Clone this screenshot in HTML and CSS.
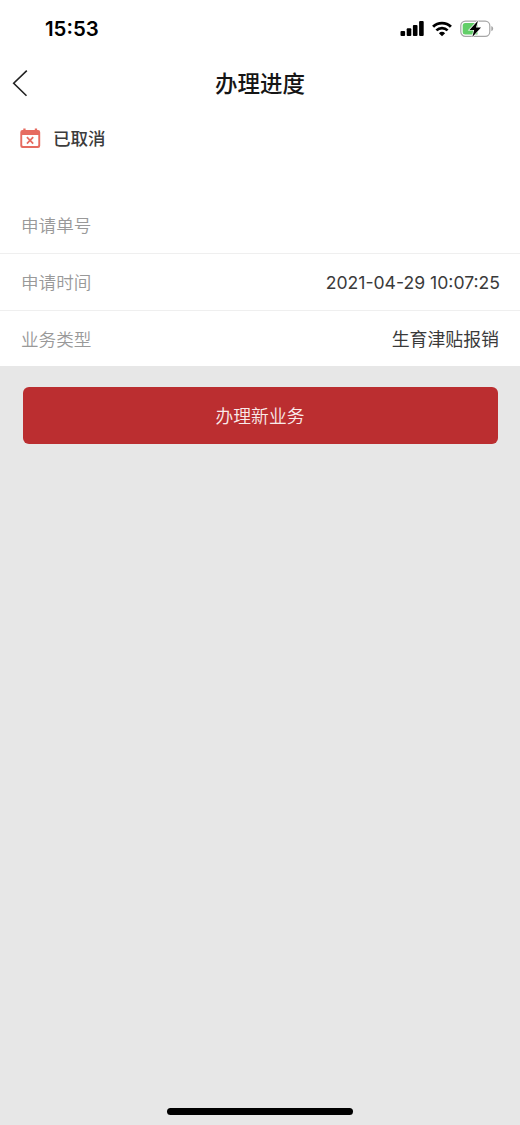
FILE: index.html
```html
<!DOCTYPE html>
<html lang="zh-CN">
<head>
<meta charset="utf-8">
<title>办理进度</title>
<link rel="stylesheet" href="styles.css">
</head>
<body>
<div class="screen">
  <div class="status-bar">
    <span class="clock">15:53</span>
    <div class="indicators">
      <svg class="signal" width="24" height="17" viewBox="0 0 24 17">
        <rect x="0.5" y="11" width="4.6" height="5" rx="1"/>
        <rect x="6.7" y="8.3" width="4.6" height="7.7" rx="1"/>
        <rect x="12.9" y="5" width="4.6" height="11" rx="1"/>
        <rect x="19.1" y="1" width="4.6" height="15" rx="1"/>
      </svg>
      <svg class="wifi" width="20" height="16" viewBox="0 0 20 16">
        <path d="M1.1 5.8A12.6 12.6 0 0 1 18.9 5.8" fill="none" stroke="#000" stroke-width="2.9"/>
        <path d="M4.4 9.4A8 8 0 0 1 15.6 9.4" fill="none" stroke="#000" stroke-width="2.7"/>
        <path d="M6.9 12.2A4.6 4.6 0 0 1 13.1 12.2L10 15.3Z"/>
      </svg>
      <svg class="battery" width="34" height="18" viewBox="0 0 34 18">
        <rect x="0.8" y="1.1" width="29" height="15.2" rx="4.6" fill="none" stroke="#a6a6a6" stroke-width="1.2"/>
        <path d="M5.2 3H17.5V14.4H5.2Q2.7 14.4 2.7 11.9V5.5Q2.7 3 5.2 3Z" fill="#62ce68"/>
        <path d="M31.3 6.1Q33.2 6.9 33.2 8.7T31.3 11.3Z" fill="#a6a6a6"/>
        <path d="M18 0.8L9.4 9.9H14.2L12.3 16.9L21 7.4H16Z" fill="#000" stroke="#fff" stroke-width="1.4" paint-order="stroke"/>
      </svg>
    </div>
  </div>
  <header class="nav">
    <svg class="back" width="18" height="28" viewBox="0 0 18 28">
      <path d="M14.8 1.7L1.7 14.2L14.5 26.8" fill="none" stroke="#222" stroke-width="1.6"/>
    </svg>
    <h1 class="title">办理进度</h1>
  </header>
  <section class="state">
    <svg class="calendar" width="21" height="21" viewBox="0 0 21 21">
      <path fill="#e66b60" fill-rule="evenodd" d="M2.5 2H3.3V0.4H5.6V2H14.8V0.4H17.1V2H18Q20.2 2 20.2 4.2V17.7Q20.2 20 18 20H2.5Q0.3 20 0.3 17.7V4.2Q0.3 2 2.5 2ZM2.2 7V17.1Q2.2 18.1 3.2 18.1H17.3Q18.3 18.1 18.3 17.1V7Z"/>
      <path d="M6.9 9.1L13.2 15.6M13.2 9.1L6.9 15.6" stroke="#e66b60" stroke-width="1.7"/>
    </svg>
    <span class="state-text">已取消</span>
  </section>
  <dl class="details">
    <div class="row"><dt>申请单号</dt><dd></dd></div>
    <div class="row"><dt>申请时间</dt><dd class="date">2021-04-29 10:07:25</dd></div>
    <div class="row"><dt>业务类型</dt><dd class="kind">生育津贴报销</dd></div>
  </dl>
  <main class="actions">
    <button class="primary">办理新业务</button>
    <div class="home-indicator"></div>
  </main>
</div>
</body>
</html>
```
FILE: styles.css
```css
* { box-sizing: border-box; }
body {
  margin: 0;
  background: #fff;
  font-family: "Noto Sans CJK SC", sans-serif;
}
.screen {
  width: 520px;
  height: 1125px;
  display: flex;
  flex-direction: column;
}
.status-bar {
  height: 56px;
  padding: 1px 26px 0 45px;
  display: flex;
  align-items: center;
  justify-content: space-between;
}
.clock {
  padding-top: 1px;
  font: 600 20.4px/24px Inter, sans-serif;
}
.indicators {
  display: flex;
  align-items: center;
  gap: 8px;
}
.nav {
  height: 54px;
  padding: 0 12px;
  display: grid;
  grid-template-columns: 18px 1fr 18px;
  align-items: center;
}
.title {
  margin: 0;
  padding-bottom: 2px;
  text-align: center;
  font-size: 22.5px;
  line-height: 32px;
  font-weight: 500;
  color: #151515;
}
.state {
  height: 87px;
  padding: 17px 20px 0;
  display: flex;
  align-items: flex-start;
  gap: 12px;
}
.state-text {
  font-size: 17.5px;
  line-height: 22px;
  font-weight: 500;
  color: #3c3c3c;
}
.details { margin: 0; }
.row {
  height: 57px;
  padding: 0 20px 0 21px;
  display: flex;
  align-items: center;
  justify-content: space-between;
  border-bottom: 1px solid #efefef;
  font-size: 17.6px;
  line-height: 26px;
}
.row:last-child {
  height: 55px;
  border-bottom: 0;
}
dt { color: #999; font-weight: 350; }
dd { margin: 0; color: #3a3a3a; }
.date {
  font-family: Inter, sans-serif;
  font-size: 17.6px;
  padding-top: 1px;
}
.kind {
  padding: 0 1px 2px 0;
  font-size: 17.9px;
}
.actions {
  flex: 1;
  padding: 21px 22.5px 10px;
  display: flex;
  flex-direction: column;
  align-items: center;
  justify-content: space-between;
  background: #e7e7e7;
}
.primary {
  width: 100%;
  height: 56.5px;
  padding: 0;
  border: 0;
  border-radius: 6px;
  background: #bb2e30;
  color: #f9eaea;
  font: 350 17.8px/26px "Noto Sans CJK SC", sans-serif;
}
.home-indicator {
  width: 186px;
  height: 7px;
  border-radius: 4px;
  background: #000;
}
.calendar { margin-top: 1px; }
```
